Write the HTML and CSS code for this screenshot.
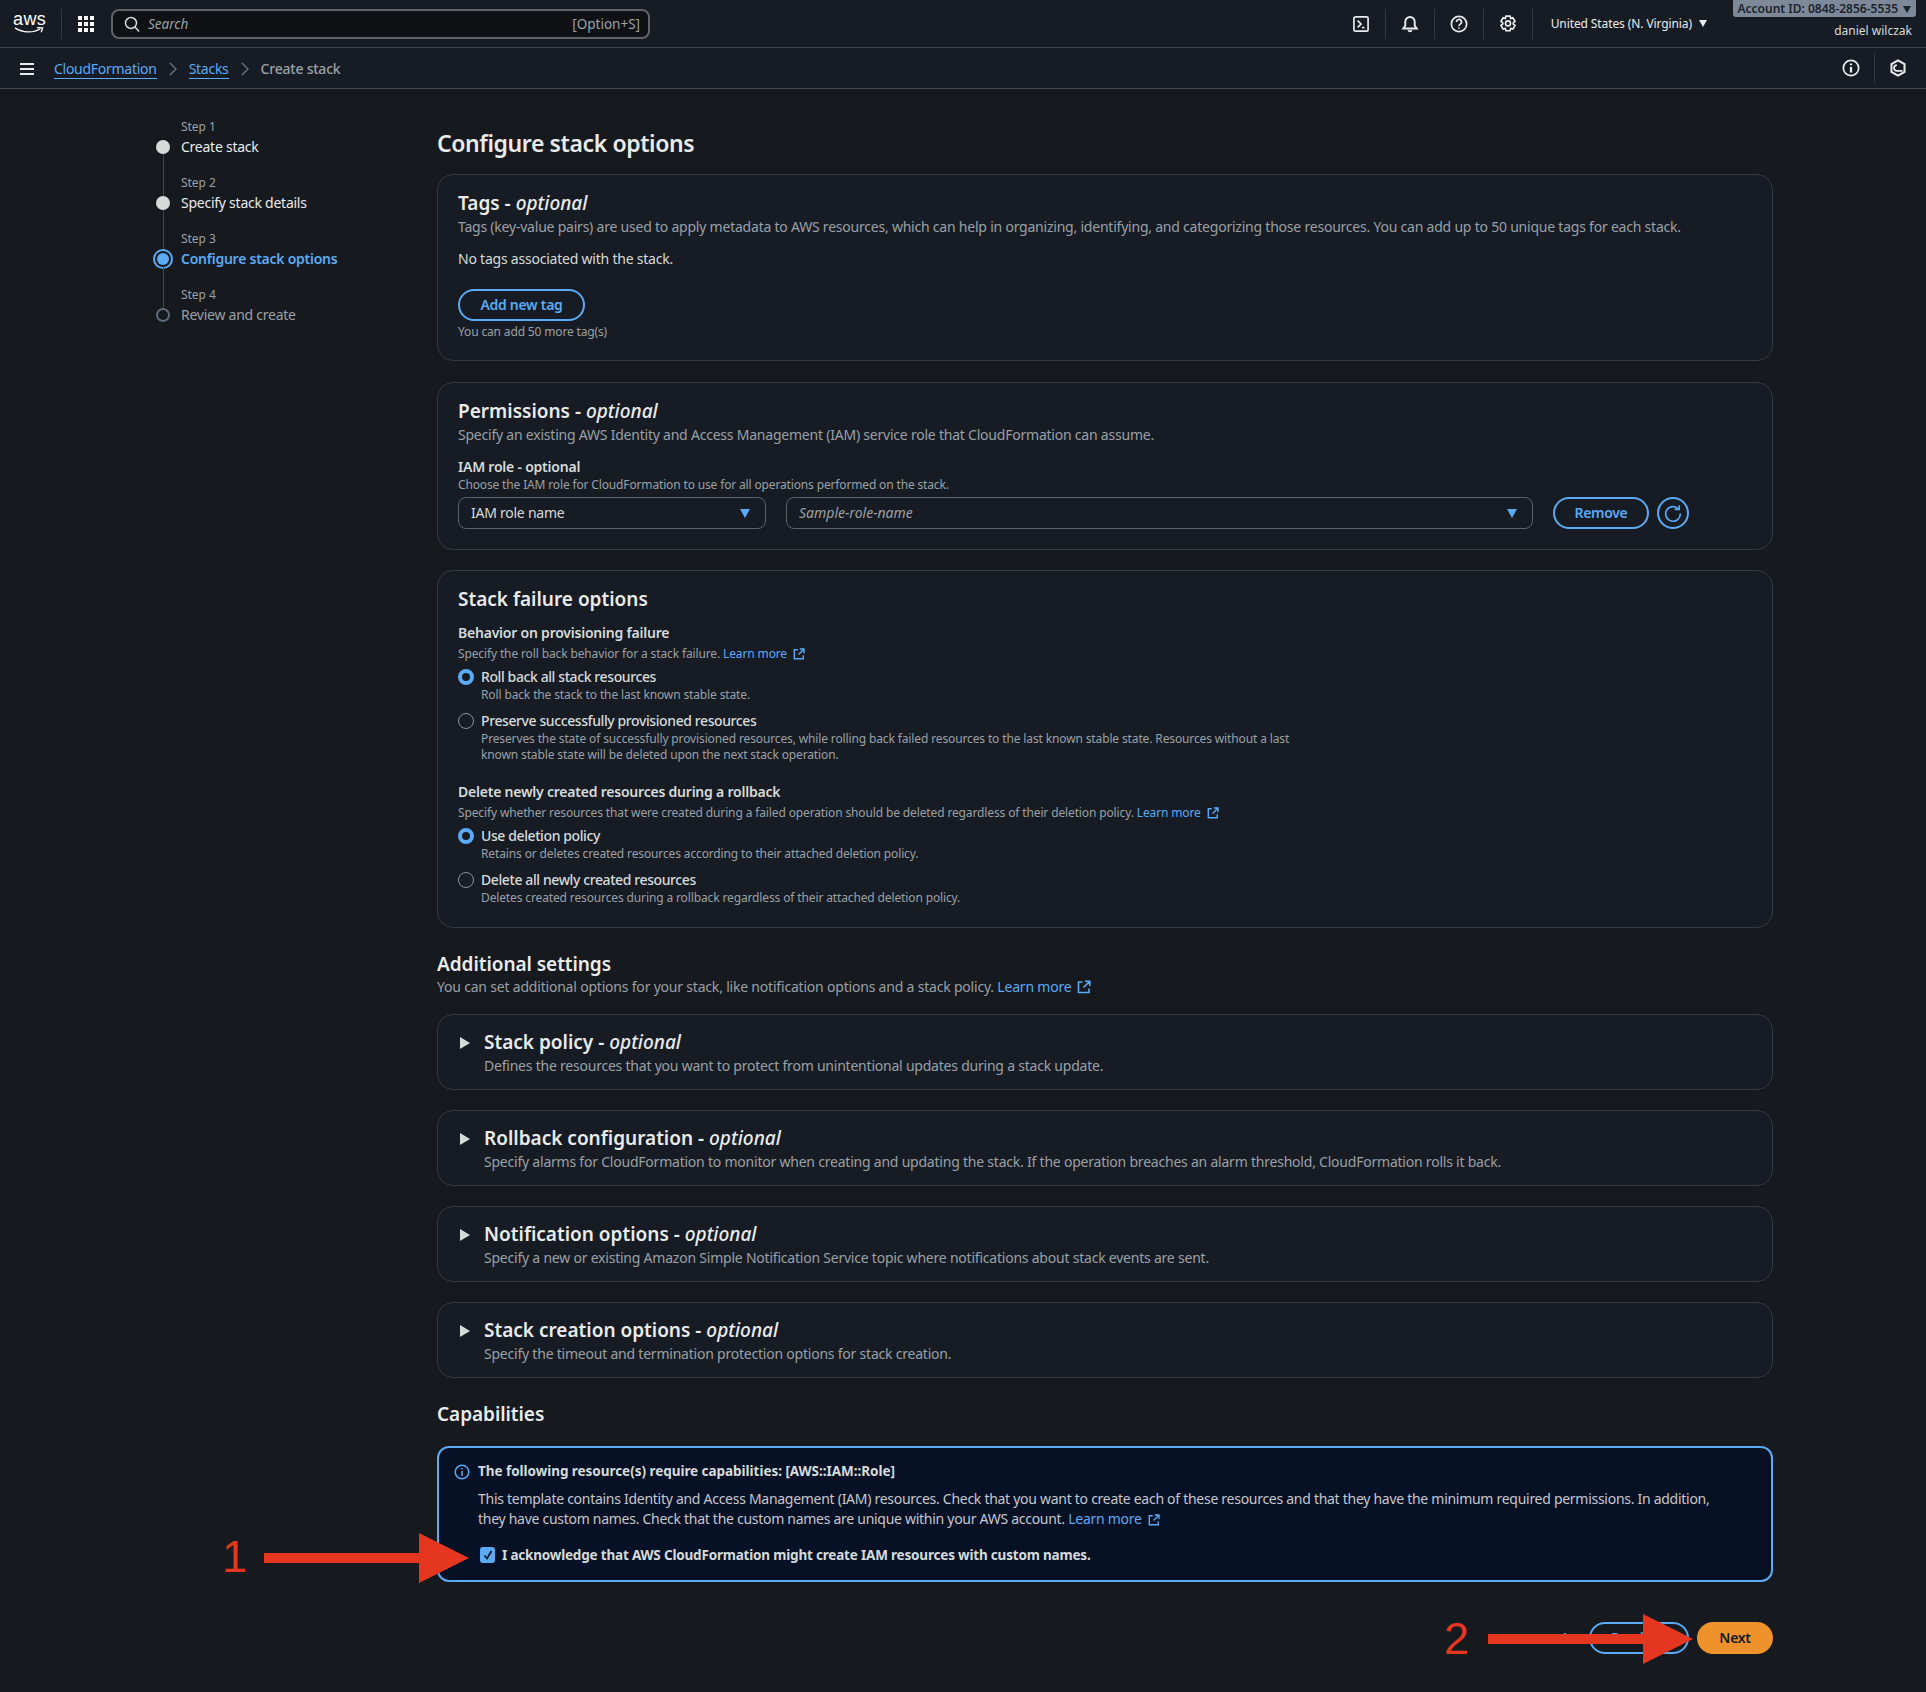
FILE: index.html
```html
<!DOCTYPE html>
<html lang="en">
<head>
<meta charset="utf-8">
<title>Configure stack options</title>
<link rel="stylesheet" href="styles.css">
</head>
<body>
<header class="topbar">
  <div class="logo"><span class="logo-text">aws</span>
    <svg class="logo-smile" viewBox="0 0 34 8" width="32" height="7"><path d="M1 1c9 6 21 6 29 1" fill="none" stroke="#fff" stroke-width="1.500"/><path d="M26 .8l6.500.2-1.500 5" fill="none" stroke="#fff" stroke-width="1.500"/></svg>
  </div>
  <div class="tb-sep tb-sep-logo"></div>
  <svg class="grid-ic" viewBox="0 0 18 18" width="18" height="18" fill="#fff"><rect x="1" y="1" width="4" height="4"/><rect x="7" y="1" width="4" height="4"/><rect x="13" y="1" width="4" height="4"/><rect x="1" y="7" width="4" height="4"/><rect x="7" y="7" width="4" height="4"/><rect x="13" y="7" width="4" height="4"/><rect x="1" y="13" width="4" height="4"/><rect x="7" y="13" width="4" height="4"/><rect x="13" y="13" width="4" height="4"/></svg>
  <div class="search">
    <svg viewBox="0 0 16 16" width="16" height="16" fill="none" stroke="#d5dbdb" stroke-width="1.500"><circle cx="7" cy="7" r="5.500"/><path d="M11 11l4 4.500"/></svg>
    <span class="search-ph">Search</span>
    <span class="search-key">[Option+S]</span>
  </div>
  <div class="tb-right">
    <svg class="tb-ic" viewBox="0 0 16 16" width="18" height="18" fill="none" stroke="#e9ebed" stroke-width="1.500"><rect x="1.700" y="1.700" width="12.600" height="12.600" rx="1.500"/><path d="M5 5l3 3-3 3M9 11.300h2"/></svg>
    <div class="tb-sep"></div>
    <svg class="tb-ic" viewBox="0 0 16 16" width="18" height="18" fill="none" stroke="#e9ebed" stroke-width="1.700"><path d="M2 12h12l-1.800-2.500V6a4.200 4.200 0 0 0-8.400 0v3.500z"/><path d="M6.500 13.500a1.600 1.600 0 0 0 3 0"/></svg>
    <div class="tb-sep"></div>
    <svg class="tb-ic" viewBox="0 0 16 16" width="18" height="18" fill="none" stroke="#e9ebed" stroke-width="1.500"><circle cx="8" cy="8" r="6.800"/><path d="M5.800 6.200a2.200 2.200 0 1 1 3.300 1.900c-.8.500-1.100.9-1.100 1.800M8 11v1.200"/></svg>
    <div class="tb-sep"></div>
    <svg class="tb-ic" viewBox="0 0 16 16" width="18" height="18" fill="none" stroke="#e9ebed" stroke-width="1.500"><path d="M6.200 1h3.600l.6 2 2-.5 1.800 3.200-1.500 1.300 0 1 1.500 1.300-1.800 3.200-2-.5-.6 2H6.200l-.6-2-2 .5L1.800 9.300 3.300 8l0-1-1.500-1.300 1.800-3.200 2 .5z"/><circle cx="8" cy="7.500" r="2.200"/></svg>
    <div class="tb-sep tb-sep-last"></div>
    <div class="region">United States (N. Virginia)<span class="caret-w"></span></div>
    <div class="account">
      <div class="acct-badge">Account ID: 0848-2856-5535<span class="caret-d"></span></div>
      <div class="acct-name">daniel wilczak</div>
    </div>
  </div>
</header>

<nav class="crumbbar">
  <svg class="menu-ic" viewBox="0 0 16 14" width="16" height="14" fill="none" stroke="#e9ebed" stroke-width="2"><path d="M1 2h14M1 7h14M1 12h14"/></svg>
  <a class="crumb-link">CloudFormation</a>
  <svg class="crumb-sep" viewBox="0 0 8 14" width="8" height="14" fill="none" stroke="#6e7681" stroke-width="1.300"><path d="M1 1l6 6-6 6"/></svg>
  <a class="crumb-link">Stacks</a>
  <svg class="crumb-sep" viewBox="0 0 8 14" width="8" height="14" fill="none" stroke="#6e7681" stroke-width="1.300"><path d="M1 1l6 6-6 6"/></svg>
  <span class="crumb-cur">Create stack</span>
  <div class="crumb-right">
    <svg class="tb-ic" viewBox="0 0 16 16" width="18" height="18" fill="none" stroke="#e9ebed" stroke-width="1.500"><circle cx="8" cy="8" r="6.800"/><path d="M8 7v5M8 4v1.600" stroke-width="2"/></svg>
    <div class="tb-sep crumb-vsep"></div>
    <svg class="tb-ic" viewBox="0 0 16 16" width="18" height="18" fill="none" stroke="#e9ebed" stroke-width="1.800"><path d="M8 1.200l5.800 3.300v7L8 14.800l-5.800-3.300v-7z"/><path d="M7 5.500a2.500 2.500 0 1 0 0 5h5" stroke-width="1.600"/></svg>
  </div>
</nav>

<div class="layout">
  <aside class="steps">
    <div class="step step-done"><div class="step-label">Step 1</div><div class="step-row"><span class="dot"></span><span class="step-title">Create stack</span></div></div>
    <div class="step step-done"><div class="step-label">Step 2</div><div class="step-row"><span class="dot"></span><span class="step-title">Specify stack details</span></div></div>
    <div class="step step-active"><div class="step-label">Step 3</div><div class="step-row"><span class="dot"></span><span class="step-title">Configure stack options</span></div></div>
    <div class="step step-todo"><div class="step-label">Step 4</div><div class="step-row"><span class="dot"></span><span class="step-title">Review and create</span></div></div>
  </aside>

  <main class="content">
    <h1 class="page-title">Configure stack options</h1>

    <section class="card card-tags">
      <h2 class="card-title">Tags - <em>optional</em></h2>
      <p class="desc">Tags (key-value pairs) are used to apply metadata to AWS resources, which can help in organizing, identifying, and categorizing those resources. You can add up to 50 unique tags for each stack.</p>
      <p class="plain no-tags">No tags associated with the stack.</p>
      <button class="btn btn-tag">Add new tag</button>
      <p class="hint">You can add 50 more tag(s)</p>
    </section>

    <section class="card card-perm">
      <h2 class="card-title">Permissions - <em>optional</em></h2>
      <p class="desc">Specify an existing AWS Identity and Access Management (IAM) service role that CloudFormation can assume.</p>
      <div class="field-label perm-label">IAM role - optional</div>
      <p class="hint perm-hint">Choose the IAM role for CloudFormation to use for all operations performed on the stack.</p>
      <div class="role-row">
        <div class="select select-a">IAM role name<span class="caret-b"></span></div>
        <div class="select select-b"><i>Sample-role-name</i><span class="caret-b"></span></div>
        <button class="btn btn-remove">Remove</button>
        <button class="btn-round">
          <svg viewBox="0 0 16 16" width="18" height="18" fill="none" stroke="#5aaaf5" stroke-width="1.500"><path d="M12.800 4.400A6.500 6.500 0 1 0 14.500 8.500"/><path d="M9.500 4.800h4V1" fill="none"/></svg>
        </button>
      </div>
    </section>

    <section class="card card-fail">
      <h2 class="card-title">Stack failure options</h2>
      <div class="field-label fail-label1">Behavior on provisioning failure</div>
      <p class="hint fail-hint">Specify the roll back behavior for a stack failure. <a class="link">Learn more<svg class="ext ext-s" viewBox="0 0 14 14" fill="none" stroke="#5aaaf5" stroke-width="1.600"><path d="M5.500 2H1.500v10.500H12V8.500M8 1.200h4.800V6M12.500 1.500L6.500 7.500"/></svg></a></p>
      <div class="radio radio-first"><span class="rd rd-on"></span><div><div class="rd-title">Roll back all stack resources</div><div class="rd-desc">Roll back the stack to the last known stable state.</div></div></div>
      <div class="radio"><span class="rd"></span><div><div class="rd-title">Preserve successfully provisioned resources</div><div class="rd-desc rd-wide">Preserves the state of successfully provisioned resources, while rolling back failed resources to the last known stable state. Resources without a last known stable state will be deleted upon the next stack operation.</div></div></div>
      <div class="field-label fail-label2">Delete newly created resources during a rollback</div>
      <p class="hint fail-hint">Specify whether resources that were created during a failed operation should be deleted regardless of their deletion policy. <a class="link">Learn more<svg class="ext ext-s" viewBox="0 0 14 14" fill="none" stroke="#5aaaf5" stroke-width="1.600"><path d="M5.500 2H1.500v10.500H12V8.500M8 1.200h4.800V6M12.500 1.500L6.500 7.500"/></svg></a></p>
      <div class="radio radio-first"><span class="rd rd-on"></span><div><div class="rd-title">Use deletion policy</div><div class="rd-desc">Retains or deletes created resources according to their attached deletion policy.</div></div></div>
      <div class="radio"><span class="rd"></span><div><div class="rd-title">Delete all newly created resources</div><div class="rd-desc">Deletes created resources during a rollback regardless of their attached deletion policy.</div></div></div>
    </section>

    <h2 class="sec-title sec-add">Additional settings</h2>
    <p class="desc sec-desc">You can set additional options for your stack, like notification options and a stack policy. <a class="link">Learn more<svg class="ext" viewBox="0 0 14 14" fill="none" stroke="#5aaaf5" stroke-width="1.600"><path d="M5.500 2H1.500v10.500H12V8.500M8 1.200h4.800V6M12.500 1.500L6.500 7.500"/></svg></a></p>

    <section class="card exp"><span class="tri"></span><div><h2 class="card-title">Stack policy - <em>optional</em></h2><p class="desc">Defines the resources that you want to protect from unintentional updates during a stack update.</p></div></section>
    <section class="card exp"><span class="tri"></span><div><h2 class="card-title">Rollback configuration - <em>optional</em></h2><p class="desc">Specify alarms for CloudFormation to monitor when creating and updating the stack. If the operation breaches an alarm threshold, CloudFormation rolls it back.</p></div></section>
    <section class="card exp"><span class="tri"></span><div><h2 class="card-title">Notification options - <em>optional</em></h2><p class="desc">Specify a new or existing Amazon Simple Notification Service topic where notifications about stack events are sent.</p></div></section>
    <section class="card exp"><span class="tri"></span><div><h2 class="card-title">Stack creation options - <em>optional</em></h2><p class="desc">Specify the timeout and termination protection options for stack creation.</p></div></section>

    <h2 class="sec-title sec-cap">Capabilities</h2>
    <section class="alert">
      <svg class="alert-ic" viewBox="0 0 16 16" width="16" height="16" fill="none" stroke="#5aaaf5" stroke-width="1.500"><circle cx="8" cy="8" r="6.800"/><path d="M8 7v5M8 4v1.600"/></svg>
      <div class="alert-body">
        <div class="alert-title">The following resource(s) require capabilities: [AWS::IAM::Role]</div>
        <p class="alert-text">This template contains Identity and Access Management (IAM) resources. Check that you want to create each of these resources and that they have the minimum required permissions. In addition, they have custom names. Check that the custom names are unique within your AWS account. <a class="link">Learn more<svg class="ext ext-s" viewBox="0 0 14 14" fill="none" stroke="#5aaaf5" stroke-width="1.600"><path d="M5.500 2H1.500v10.500H12V8.500M8 1.200h4.800V6M12.500 1.500L6.500 7.500"/></svg></a></p>
        <div class="ack"><span class="check"><svg viewBox="0 0 12 12" width="12" height="12" fill="none" stroke="#0f1b2a" stroke-width="1.800"><path d="M2.500 6.500l2.500 3L9.500 2"/></svg></span><span>I acknowledge that AWS CloudFormation might create IAM resources with custom names.</span></div>
      </div>
    </section>

    <div class="actions">
      <button class="btn-text">Cancel</button>
      <button class="btn btn-prev">Previous</button>
      <button class="btn btn-next">Next</button>
    </div>
  </main>
</div>

<div class="anno anno-1">1</div>
<svg class="arrow arrow-1" viewBox="0 0 205 50" width="205" height="50"><path d="M0 20h155V0l50 25-50 25V30H0z" fill="#e5361f"/></svg>
<div class="anno anno-2">2</div>
<svg class="arrow arrow-2" viewBox="0 0 205 50" width="205" height="50"><path d="M0 20h155V0l50 25-50 25V30H0z" fill="#e5361f"/></svg>
</body>
</html>
```

FILE: styles.css
```css
* { box-sizing: border-box; }
html, body { margin: 0; padding: 0; }
body {
  position: relative;
  width: 1926px;
  height: 1692px;
  overflow: hidden;
  background: #16191e;
  color: #d5dbdb;
  font-family: "Noto Sans", "Open Sans", sans-serif;
  font-size: 14px;
  line-height: 20px;
  letter-spacing: -0.22px;
}
button { font-family: inherit; cursor: pointer; }
p, h1, h2 { margin: 0; }

/* Top bar */
.topbar {
  height: 48px;
  display: flex;
  align-items: center;
  background: #171c24;
  border-bottom: 1px solid #414750;
  padding-left: 13px;
}
.logo { width: 34px; display: flex; flex-direction: column; align-items: flex-start; }
.logo-text { color: #fff; font-family: "Liberation Sans", sans-serif; font-size: 18px; line-height: 16px; margin-top: -3px; letter-spacing: 0.4px; }
.logo-smile { margin-top: 0; margin-left: 0; }
.tb-sep { width: 1px; height: 30px; background: #333a44; flex: none; }
.tb-sep-logo { margin-left: 14px; }
.grid-ic { margin-left: 15px; }
.search {
  margin-left: 16px;
  width: 539px;
  height: 30px;
  display: flex;
  align-items: center;
  background: #0f1115;
  border: 2px solid #5f6368;
  border-radius: 8px;
  padding: 0 8px 0 11px;
  color: #9aa0a6;
}
.search-ph { font-style: italic; margin-left: 8px; font-size: 13.500px; letter-spacing: 0; }
.search-key { margin-left: auto; font-size: 13.500px; letter-spacing: 0; }
.tb-right { margin-left: auto; display: flex; align-items: center; position: relative; height: 47px; padding-right: 10px; }
.tb-ic { flex: none; }
.tb-right .tb-ic { margin-right: 15px; }
.tb-right .tb-sep { margin-right: 15px; }
.tb-right .tb-sep-last { margin-right: 18px; }
.region { color: #e9ebed; font-size: 12px; letter-spacing: -0.1px; display: flex; align-items: center; margin-right: 24px; }
.caret-w { display: inline-block; margin-left: 7px; border-left: 4px solid transparent; border-right: 4px solid transparent; border-top: 7px solid #e9ebed; }
.caret-d { display: inline-block; margin-left: 5px; border-left: 4px solid transparent; border-right: 4px solid transparent; border-top: 7px solid #1b232d; }
.account { display: flex; flex-direction: column; align-items: flex-end; align-self: flex-start; width: 185px; }
.acct-badge {
  background: #7d8998;
  color: #1b232d;
  font-size: 12px;
  font-weight: 600;
  letter-spacing: 0;
  line-height: 17px;
  height: 17px;
  padding: 0 5px 0 4px;
  border-radius: 0 0 3px 3px;
  white-space: nowrap;
}
.acct-name { color: #d5dbdb; font-size: 12px; letter-spacing: 0; line-height: 16px; margin-top: 6px; padding-right: 4px; }

/* Breadcrumb bar */
.crumbbar {
  height: 41px;
  display: flex;
  align-items: center;
  background: #171c24;
  border-bottom: 1px solid #414750;
  padding: 2px 0 0 19px;
}
.menu-ic { margin-right: 19px; }
.crumb-link { color: #5aaaf5; border-bottom: 1px solid #5aaaf5; line-height: 18px; letter-spacing: -0.27px; }
.crumb-sep { margin: 0 12px; }
.crumb-cur { color: #9aa0a6; font-weight: 500; letter-spacing: -0.22px; }
.crumb-right { margin-left: auto; display: flex; align-items: center; padding-right: 19px; margin-top: -2px; }
.crumb-vsep { margin: 0 14px; }

/* Layout */
.layout { display: flex; }
.steps { width: 437px; flex: none; padding: 28px 0 0 153px; }
.step { position: relative; height: 56px; padding-left: 28px; }
.step-label { font-size: 12px; line-height: 20px; color: #9aa0a6; letter-spacing: -0.05px; }
.step-row { display: flex; align-items: center; line-height: 20px; }
.step-title { color: #e9ebed; letter-spacing: -0.25px; }
.dot { position: absolute; left: 3px; width: 14px; height: 14px; border-radius: 50%; background: #d5dbdb; }
.step:not(:last-child)::after { content: ""; position: absolute; left: 9.500px; top: 37px; width: 1px; height: 42px; background: #414750; }
.step-active .step-title { color: #5aaaf5; font-weight: 600; }
.step-active .dot { width: 12px; height: 12px; left: 4px; background: #5aaaf5; box-shadow: 0 0 0 2px #16191e, 0 0 0 4px #5aaaf5; }
.step-todo .step-title { color: #9aa0a6; }
.step-todo .dot { background: transparent; border: 2px solid #5f6b7a; }

/* Content */
.content { width: 1336px; flex: none; }
.page-title { font-size: 23px; letter-spacing: -0.4px; line-height: 28px; font-weight: 600; color: #e9ebed; margin-top: 40px; height: 45px; }
.card { background: #171c24; border: 1px solid #353a42; border-radius: 16px; padding: 16px 20px; }
.card-title { font-size: 19px; letter-spacing: 0; line-height: 24px; font-weight: 600; color: #e9ebed; }
.card-title em { font-weight: 500; }
.desc { color: #9aa0a6; line-height: 20px; margin-top: 2px; }
.plain { color: #d5dbdb; }
.hint { font-size: 12px; letter-spacing: -0.15px; line-height: 16px; color: #9aa0a6; }
.link { color: #5aaaf5; }
.ext { width: 14px; height: 14px; margin-left: 6px; vertical-align: -2px; }
.ext-s { width: 12px; height: 12px; }

.card-tags { height: 187px; margin-bottom: 21px; }
.no-tags { margin-top: 12px; }
.btn { background: transparent; border: 2px solid #5aaaf5; border-radius: 20px; color: #5aaaf5; font-weight: 600; font-size: 14px; letter-spacing: -0.3px; }
.btn-tag { width: 127px; height: 32px; margin-top: 20px; display: block; line-height: 1; }
.card-tags .hint { margin-top: 3px; }

.card-perm { height: 168px; margin-bottom: 20px; }
.field-label { font-weight: 600; color: #d5dbdb; font-size: 14px; line-height: 20px; }
.perm-label { margin-top: 12px; }
.perm-hint { margin-top: 0; }
.role-row { display: flex; align-items: center; margin-top: 4px; }
.select {
  height: 32px;
  display: flex;
  align-items: center;
  justify-content: space-between;
  border: 1px solid #5f6368;
  border-radius: 8px;
  padding: 0 15px 0 12px;
  color: #d5dbdb;
  background: #171c24;
}
.select-a { width: 308px; margin-right: 20px; letter-spacing: -0.25px; }
.select-b { width: 747px; margin-right: 20px; color: #9aa0a6; letter-spacing: 0; }
.caret-b { border-left: 5px solid transparent; border-right: 5px solid transparent; border-top: 9px solid #5aaaf5; }
.btn-remove { width: 96px; height: 32px; line-height: 1; }
.btn-round { width: 32px; height: 32px; margin-left: 8px; padding: 0; border: 2px solid #5aaaf5; border-radius: 50%; background: transparent; display: flex; align-items: center; justify-content: center; }

.card-fail { height: 358px; margin-bottom: 24px; }
.fail-label1 { margin-top: 12px; }
.fail-hint { margin-top: 3px; letter-spacing: -0.13px; }
.fail-label2 { margin-top: 19px; }
.radio { display: flex; gap: 8px; margin-top: 8px; }
.radio-first { margin-top: 5px; }
.rd { flex: none; width: 16px; height: 16px; margin-top: 2px; border: 1px solid #8d9299; border-radius: 50%; }
.rd-on { border: 4px solid #5aaaf5; background: #171c24; }
.rd-title { color: #d5dbdb; font-weight: 500; line-height: 20px; letter-spacing: -0.4px; margin-left: -1px; }
.rd-desc { font-size: 12px; letter-spacing: -0.13px; line-height: 16px; color: #9aa0a6; margin-left: -1px; }
.rd-wide { width: 830px; }

.sec-title { font-size: 19px; letter-spacing: -0.05px; line-height: 24px; font-weight: 600; color: #e9ebed; }
.sec-desc { margin-top: 1px; margin-bottom: 17px; letter-spacing: -0.2px; }
.exp { display: flex; gap: 14px; height: 76px; margin-bottom: 20px; padding: 15px 20px 15px 22px; }
.exp .desc { margin-top: 2px; }
.tri { flex: none; margin-top: 7px; width: 0; height: 0; border-top: 6px solid transparent; border-bottom: 6px solid transparent; border-left: 10px solid #d5dbdb; }
.sec-cap { margin-top: 24px; margin-bottom: 20px; }

.alert { position: relative; height: 136px; background: #071126; border: 2px solid #5aaaf5; border-radius: 12px; padding: 13px 16px 0 15px; display: flex; gap: 8px; }
.alert-ic { flex: none; margin-top: 3px; }
.alert-title { color: #d5dbdb; font-weight: 700; font-size: 13.500px; letter-spacing: -0.04px; line-height: 20px; }
.alert-text { color: #c6c6cd; line-height: 20px; margin-top: 8px; width: 1260px; letter-spacing: -0.28px; }
.ack { display: flex; align-items: center; gap: 7px; margin: 16px 0 0 2px; color: #d5dbdb; font-weight: 700; font-size: 13.500px; letter-spacing: -0.19px; }
.check { width: 15px; height: 16px; border-radius: 3px; background: #5aaaf5; display: flex; align-items: center; justify-content: center; }

.actions { display: flex; justify-content: flex-end; align-items: center; margin-top: 40px; gap: 8px; }
.btn-text { background: none; border: 0; color: #5aaaf5; font-weight: 600; font-size: 14px; margin-right: 8px; }
.btn-prev { width: 100px; height: 32px; line-height: 1; }
.btn-next { width: 76px; height: 32px; line-height: 1; background: #ee932b; border-color: #ee932b; color: #16191e; }

/* Annotations drawn over the screenshot */
.anno { position: absolute; color: #e5361f; font-family: "Liberation Sans", sans-serif; font-size: 45px; line-height: 46px; letter-spacing: 0; }
.anno-1 { left: 222px; top: 1534px; }
.anno-2 { left: 1444px; top: 1616px; }
.arrow { position: absolute; }
.arrow-1 { left: 264px; top: 1533px; }
.arrow-2 { left: 1488px; top: 1614px; }
```
